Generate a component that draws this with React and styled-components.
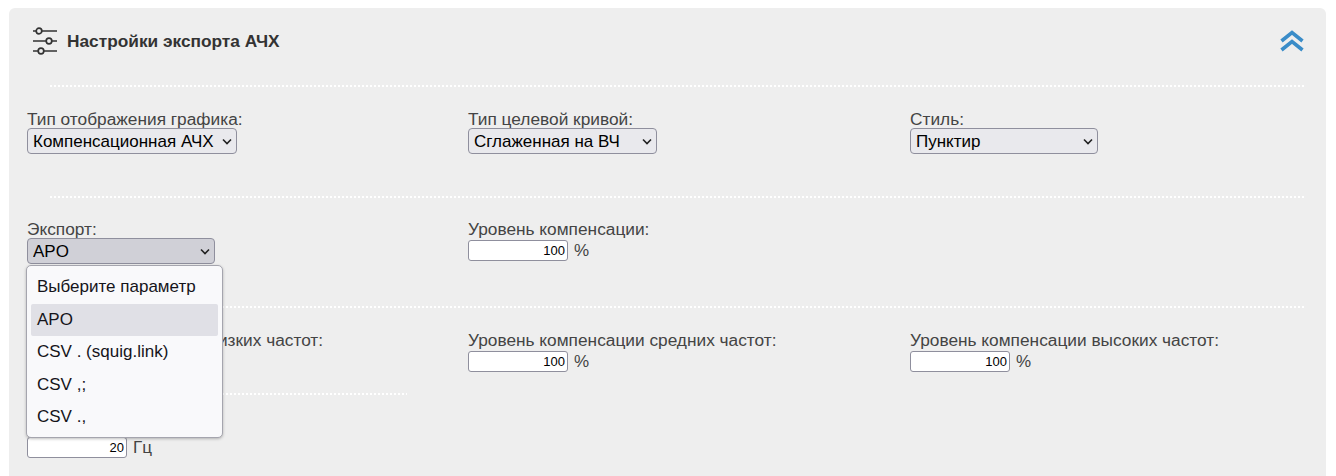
import React from 'react'
import styled, { createGlobalStyle } from 'styled-components'

const GlobalStyle = createGlobalStyle`
  html, body {
    margin: 0;
    padding: 0;
    background: #fff;
    font-family: "Liberation Sans", Arial, sans-serif;
  }
`

const Panel = styled.section`
  margin: 8px 10px 0 9px;
  height: 468px;
  box-sizing: border-box;
  padding: 0 22px 0 18px;
  background: #eee;
  border-radius: 6px 6px 0 0;
  overflow: hidden;
`

const Header = styled.header`
  display: flex;
  align-items: center;
  justify-content: space-between;
  height: 77px;
  box-sizing: border-box;
  padding: 0 0 12px 6px;
`

const HeaderLeft = styled.div`
  display: flex;
  align-items: center;
  gap: 10px;
`

const Title = styled.h2`
  margin: 2px 0 0;
  font-size: 17.3px;
  font-weight: bold;
  color: #333;
`

const Divider = styled.div`
  height: 2px;
  margin-left: 22px;
  width: ${p => p.$short ? '358px' : 'auto'};
  background-image: radial-gradient(circle, #fff 1px, transparent 1px);
  background-size: 4px 2px;
`

const Row = styled.div`
  display: grid;
  grid-template-columns: 441px 442px 1fr;
  height: ${p => p.$height}px;
  padding-top: ${p => p.$top}px;
  box-sizing: border-box;
`

const Field = styled.div`
  min-width: 0;
`

const Label = styled.label`
  display: block;
  font-size: 17.3px;
  line-height: 18px;
  color: #444;
`

const SelectWrap = styled.div`
  position: relative;
  width: ${p => p.$width}px;
  height: 26px;
`

const Select = styled.select`
  display: block;
  width: 100%;
  height: 100%;
  appearance: none;
  box-sizing: border-box;
  padding: 0 4px 0 5px;
  border: 1px solid #8f8f9d;
  border-radius: 4px;
  background: ${p => p.$open ? '#d0d0d7' : '#e9e9ed'};
  font-family: inherit;
  font-size: 17px;
  color: #000;
`

const Chevron = styled.svg`
  position: absolute;
  top: 10px;
  right: 5px;
  width: 10px;
  height: 7px;
  pointer-events: none;
`

const InputRow = styled.div`
  display: flex;
  align-items: center;
  gap: 6px;
  margin-top: 2px;
  font-size: 17px;
  color: #444;
`

const NumberInput = styled.input`
  width: 100px;
  height: 21px;
  box-sizing: border-box;
  padding: 1px 2px;
  border: 1px solid #8f8f9d;
  border-radius: 3px;
  background: #fff;
  font-family: "Liberation Sans", Arial, sans-serif;
  font-size: 13px;
  color: #000;
  text-align: right;
`

const Menu = styled.ul`
  position: absolute;
  top: calc(100% + 1px);
  left: -1px;
  z-index: 2;
  width: 197px;
  height: 173px;
  margin: 0;
  padding: 5px 4px;
  box-sizing: border-box;
  list-style: none;
  background: #f9f9fb;
  border: 1px solid #a5a5ae;
  border-radius: 5px;
  box-shadow: 0 1px 3px rgba(0, 0, 0, 0.25);
`

const MenuItem = styled.li`
  height: 32.5px;
  padding: 0 6px;
  font-size: 17px;
  line-height: 32.5px;
  color: #15141a;
  border-radius: 2px;
  background: ${p => p.$active ? '#e0e0e6' : 'transparent'};
`

function ChevronDown() {
  return (
    <Chevron viewBox="0 0 10 7">
      <path d="M1 1.5 L5 5.5 L9 1.5" fill="none" stroke="#222" strokeWidth="1.6" />
    </Chevron>
  )
}

function SlidersIcon() {
  return (
    <svg width="24" height="28" viewBox="0 0 24 28" fill="none" stroke="#333" strokeWidth="1.7">
      <path d="M0 4 H3 M9 4 H24" />
      <circle cx="6" cy="4" r="2.8" />
      <path d="M0 14 H13 M19 14 H24" />
      <circle cx="16" cy="14" r="2.8" />
      <path d="M0 24 H5 M11 24 H24" />
      <circle cx="8" cy="24" r="2.8" />
    </svg>
  )
}

function DoubleUpIcon() {
  return (
    <svg width="24" height="22" viewBox="0 0 24 22" fill="none" stroke="#3a8cc8" strokeWidth="3.6">
      <path d="M1.5 11 L12 2.5 L22.5 11" />
      <path d="M1.5 20 L12 11.5 L22.5 20" />
    </svg>
  )
}

function SelectField({ label, width, value, options, open, children }) {
  return (
    <>
      <Label>{label}</Label>
      <SelectWrap $width={width}>
        <Select $open={open} defaultValue={value}>
          {options.map(o => <option key={o}>{o}</option>)}
        </Select>
        <ChevronDown />
        {children}
      </SelectWrap>
    </>
  )
}

function NumberField({ label, value, unit }) {
  return (
    <>
      <Label>{label}</Label>
      <InputRow>
        <NumberInput defaultValue={value} />
        {unit}
      </InputRow>
    </>
  )
}

const exportOptions = ['Выберите параметр', 'APO', 'CSV . (squig.link)', 'CSV ,;', 'CSV .,']

export default function App() {
  return (
    <>
      <GlobalStyle />
      <Panel>
        <Header>
          <HeaderLeft>
            <SlidersIcon />
            <Title>Настройки экспорта АЧХ</Title>
          </HeaderLeft>
          <DoubleUpIcon />
        </Header>
        <Divider />
        <Row $height={109} $top={23}>
          <Field>
            <SelectField label="Тип отображения графика:" width={210} value="Компенсационная АЧХ" options={['Компенсационная АЧХ']} />
          </Field>
          <Field>
            <SelectField label="Тип целевой кривой:" width={189} value="Сглаженная на ВЧ" options={['Сглаженная на ВЧ']} />
          </Field>
          <Field>
            <SelectField label="Стиль:" width={188} value="Пунктир" options={['Пунктир']} />
          </Field>
        </Row>
        <Divider />
        <Row $height={108} $top={22}>
          <Field>
            <SelectField label="Экспорт:" width={188} value="APO" options={exportOptions} open>
              <Menu>
                {exportOptions.map(o => <MenuItem key={o} $active={o === 'APO'}>{o}</MenuItem>)}
              </Menu>
            </SelectField>
          </Field>
          <Field>
            <NumberField label="Уровень компенсации:" value="100" unit="%" />
          </Field>
        </Row>
        <Divider />
        <Row $height={85} $top={23}>
          <Field>
            <NumberField label="Уровень компенсации низких частот:" value="100" unit="%" />
          </Field>
          <Field>
            <NumberField label="Уровень компенсации средних частот:" value="100" unit="%" />
          </Field>
          <Field>
            <NumberField label="Уровень компенсации высоких частот:" value="100" unit="%" />
          </Field>
        </Row>
        <Divider $short />
        <Row $height={70} $top={22}>
          <Field>
            <NumberField label="Частота:" value="20" unit="Гц" />
          </Field>
        </Row>
      </Panel>
    </>
  )
}
